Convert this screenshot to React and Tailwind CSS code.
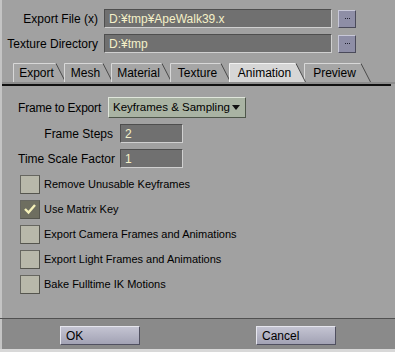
import React from 'react';

const font = { fontFamily: '"Liberation Sans", Arial, sans-serif' };

const tabs = [
  { name: 'Export', w: 53 },
  { name: 'Mesh', w: 49 },
  { name: 'Material', w: 61 },
  { name: 'Texture', w: 61 },
  { name: 'Animation', w: 77, active: true },
  { name: 'Preview', w: 67 },
];

function Tab({ name, w, active }) {
  const h = 19;
  return (
    <div className={`relative -ml-[2px] first:ml-0 h-[19px] shrink-0 ${active ? 'z-10' : ''}`} style={{ width: w }}>
      <svg className="absolute inset-0" width={w} height={h} viewBox={`0 0 ${w} ${h}`}>
        <polygon points={`0.5,${h} 0.5,0.5 ${w - 10},0.5 ${w - 0.5},${h}`} fill={active ? '#d6d6d6' : '#a6a6a6'} />
        <polyline points={`0.5,${h} 0.5,0.5 ${w - 10},0.5`} fill="none" stroke={active ? '#f2f2f2' : '#d8d8d8'} strokeWidth="1" />
        <line x1={w - 10} y1="0.5" x2={w - 0.5} y2={h} stroke="#4a4a4a" strokeWidth="1" />
      </svg>
      <span className="absolute left-0 top-0 h-full flex items-center justify-center whitespace-nowrap text-[12px] text-black" style={{ width: w - 6 }}>
        {name}
      </span>
    </div>
  );
}

function Field({ value, className }) {
  return (
    <div className={`h-[19px] shrink-0 bg-[#707070] border border-t-[#4e4e4e] border-l-[#4e4e4e] border-b-[#d0d0d0] border-r-[#d0d0d0] flex items-center pl-[4px] whitespace-nowrap text-[12px] text-[#f4f0c8] ${className}`}>
      {value}
    </div>
  );
}

function DotsButton() {
  return (
    <div className="w-[18px] h-[18px] bg-[#8e8ea6] border border-t-[#c8c8d8] border-l-[#c8c8d8] border-b-[#4a4a5a] border-r-[#4a4a5a] flex items-center justify-center gap-[1px]">
      <span className="w-[1px] h-[1px] bg-[#202030]"></span>
      <span className="w-[1px] h-[1px] bg-[#202030]"></span>
      <span className="w-[1px] h-[1px] bg-[#202030]"></span>
    </div>
  );
}

function Check({ label, checked }) {
  return (
    <div className="flex items-center h-[18px] mb-[7px]">
      <div className={`w-[20px] h-[19px] shrink-0 border border-t-[#666660] border-l-[#666660] border-b-[#55554e] border-r-[#55554e] flex items-center justify-center ${checked ? 'bg-[#6e6e60]' : 'bg-[#b8b8aa]'}`}>
        {checked && (
          <svg width="14" height="12" viewBox="0 0 14 12">
            <path d="M2 6 L5.5 9.5 L12 2" fill="none" stroke="#f4f0b8" strokeWidth="2.4" />
          </svg>
        )}
      </div>
      <span className="ml-[4px] whitespace-nowrap text-[11px] text-black">{label}</span>
    </div>
  );
}

function Button({ label }) {
  return (
    <div className="w-[80px] h-[19px] bg-gradient-to-b from-[#c4c4d2] to-[#a2a2b4] border border-t-[#e6e6ee] border-l-[#e6e6ee] border-b-[#505060] border-r-[#505060] flex items-center pl-[5px] text-[12px] text-black">
      {label}
    </div>
  );
}

export default function App() {
  return (
    <div className="w-[395px] h-[352px] bg-[#d8d8d8] flex flex-col overflow-hidden" style={font}>
      <div className="h-[318px] shrink-0 bg-[#a1a1a1] border-l-2 border-[#c4c4c4]">
        {/* file rows */}
        <div className="pt-[9px] flex flex-col gap-[6px]">
          <div className="flex items-center">
            <span className="w-[96px] shrink-0 text-right whitespace-nowrap text-[12px] text-black">Export File (x)</span>
            <Field value="D:¥tmp¥ApeWalk39.x" className="ml-[6px] w-[228px]" />
            <div className="ml-[6px]"><DotsButton /></div>
          </div>
          <div className="flex items-center">
            <span className="w-[96px] shrink-0 text-right whitespace-nowrap text-[12px] text-black">Texture Directory</span>
            <Field value="D:¥tmp" className="ml-[6px] w-[228px]" />
            <div className="ml-[6px]"><DotsButton /></div>
          </div>
        </div>

        {/* tabs */}
        <div className="mt-[10px] pl-[11px] flex">
          {tabs.map(t => (
            <Tab key={t.name} {...t} />
          ))}
        </div>
        <div className="h-[2px] bg-[#8c8c8c]"></div>
        <div className="h-[2px] bg-[#101010] mr-[4px]"></div>

        {/* animation panel */}
        <div className="pt-[11px] pl-[16px]">
          <div className="flex items-center">
            <span className="w-[83px] shrink-0 text-right whitespace-nowrap text-[12px] tracking-[-0.2px] text-black">Frame to Export</span>
            <div className="ml-[7px] w-[138px] h-[21px] shrink-0 bg-[#a9b3a3] border border-t-[#e0e6dc] border-l-[#e0e6dc] border-b-[#4e564a] border-r-[#4e564a] flex items-center justify-between pl-[4px] pr-[5px] whitespace-nowrap text-[11.5px] text-black">
              <span>Keyframes &amp; Sampling</span>
              <svg width="8" height="5" viewBox="0 0 8 5"><polygon points="0,0 8,0 4,5" fill="#111" /></svg>
            </div>
          </div>
          <div className="flex items-center mt-[6px]">
            <span className="w-[95px] shrink-0 text-right whitespace-nowrap text-[12px] text-black">Frame Steps</span>
            <Field value="2" className="ml-[7px] w-[63px]" />
          </div>
          <div className="flex items-center mt-[6px]">
            <span className="w-[95px] shrink-0 text-right whitespace-nowrap text-[12px] text-black">Time Scale Factor</span>
            <Field value="1" className="ml-[7px] w-[63px]" />
          </div>
          <div className="mt-[7px] pl-[2px]">
            <Check label="Remove Unusable Keyframes" />
            <Check label="Use Matrix Key" checked />
            <Check label="Export Camera Frames and Animations" />
            <Check label="Export Light Frames and Animations" />
            <Check label="Bake Fulltime IK Motions" />
          </div>
        </div>
      </div>
      <div className="h-[1px] shrink-0 bg-[#505050]"></div>
      <div className="h-[30px] shrink-0 bg-[#8a8a8a] border-l-2 border-[#c4c4c4] flex items-start pt-[7px]">
        <div className="ml-[58px]"><Button label="OK" /></div>
        <div className="ml-[116px]"><Button label="Cancel" /></div>
      </div>
    </div>
  );
}
